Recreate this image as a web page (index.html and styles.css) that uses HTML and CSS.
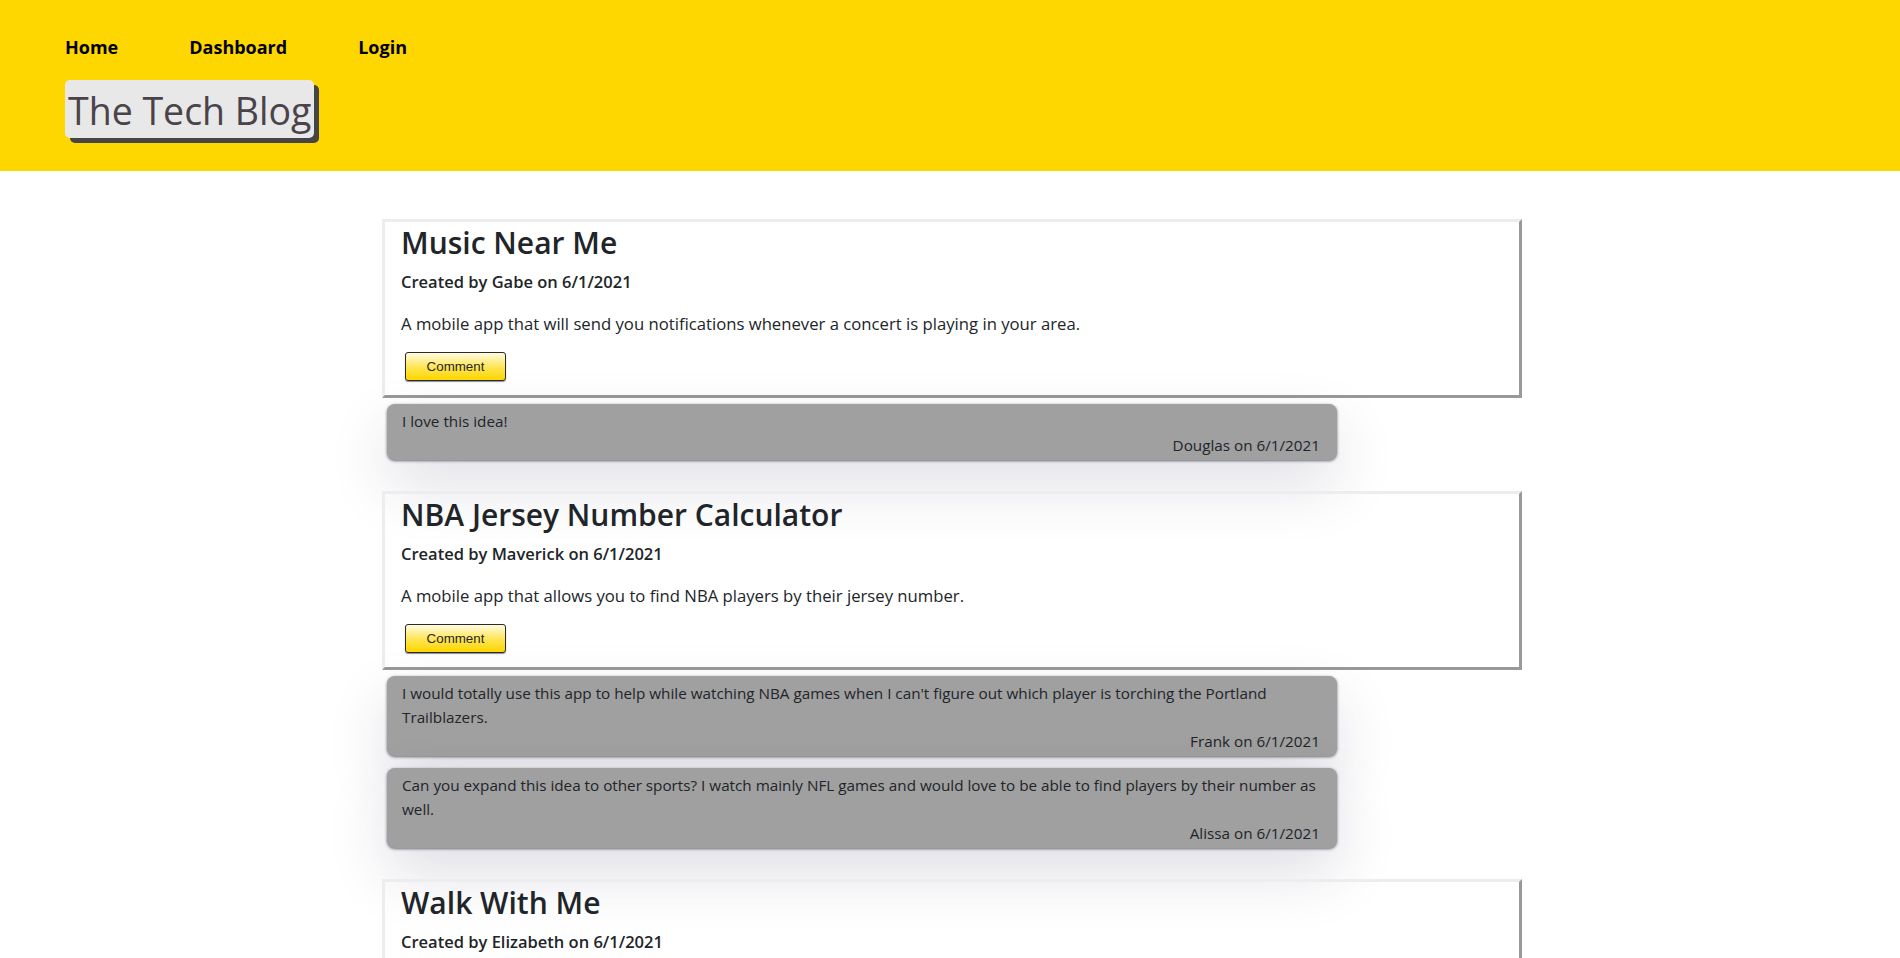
FILE: index.html
```html
<!DOCTYPE html>
<html lang="en">
<head>
<meta charset="utf-8">
<title>The Tech Blog</title>
<link rel="stylesheet" href="styles.css">
</head>
<body>
<header class="site-header">
  <nav class="nav">
    <a class="nav-link" href="#">Home</a>
    <a class="nav-link" href="#">Dashboard</a>
    <a class="nav-link" href="#">Login</a>
  </nav>
  <h1 class="brand">The Tech Blog</h1>
</header>
<main class="feed">
  <article class="post">
    <section class="card">
      <h2 class="card-title">Music Near Me</h2>
      <h5 class="card-meta">Created by Gabe on 6/1/2021</h5>
      <p class="card-text">A mobile app that will send you notifications whenever a concert is playing in your area.</p>
      <button class="btn-comment" type="button">Comment</button>
    </section>
    <div class="comments">
      <div class="comment">
        <p class="comment-text">I love this idea!</p>
        <p class="comment-meta">Douglas on 6/1/2021</p>
      </div>
    </div>
  </article>
  <article class="post">
    <section class="card">
      <h2 class="card-title">NBA Jersey Number Calculator</h2>
      <h5 class="card-meta">Created by Maverick on 6/1/2021</h5>
      <p class="card-text">A mobile app that allows you to find NBA players by their jersey number.</p>
      <button class="btn-comment" type="button">Comment</button>
    </section>
    <div class="comments">
      <div class="comment">
        <p class="comment-text">I would totally use this app to help while watching NBA games when I can't figure out which player is torching the Portland Trailblazers.</p>
        <p class="comment-meta">Frank on 6/1/2021</p>
      </div>
      <div class="comment">
        <p class="comment-text">Can you expand this idea to other sports? I watch mainly NFL games and would love to be able to find players by their number as well.</p>
        <p class="comment-meta">Alissa on 6/1/2021</p>
      </div>
    </div>
  </article>
  <article class="post">
    <section class="card">
      <h2 class="card-title">Walk With Me</h2>
      <h5 class="card-meta">Created by Elizabeth on 6/1/2021</h5>
      <p class="card-text">A mobile app that connects you with people who want to go for a walk nearby.</p>
      <button class="btn-comment" type="button">Comment</button>
    </section>
  </article>
</main>
</body>
</html>
```
FILE: styles.css
```css
* { box-sizing: border-box; }

body {
  margin: 0;
  background: #fff;
  color: #212529;
  font-family: "Open Sans", "Noto Sans", sans-serif;
  font-size: 15.25px;
  line-height: 24px;
}

.site-header {
  height: 171px;
  padding: 35px 0 0 65px;
  background: #ffd700;
}

.nav {
  display: flex;
  gap: 71px;
  line-height: 24px;
}

.nav-link {
  color: #000;
  font-size: 18px;
  font-weight: 700;
  text-decoration: none;
}

.brand {
  display: inline-block;
  margin: 21px 0 0;
  padding: 7px 3px 3px 3px;
  background: #e8e8e8;
  border-radius: 5px;
  box-shadow: 5px 5px 0 #454545;
  color: #4a4349;
  font-size: 37.5px;
  font-weight: 400;
  line-height: 48px;
}

.feed {
  display: flex;
  flex-direction: column;
  gap: 31px;
  width: 1140px;
  margin: 48px 0 0 calc(50% - 568px);
}

.card {
  border: 3px solid;
  border-color: #ededed #999 #999 #ededed;
  padding: 2px 16px 14px;
}

.card-title {
  margin: 0;
  font-size: 30px;
  font-weight: 600;
  line-height: 38px;
}

.card-meta {
  margin: 8px 0 0;
  font-size: 16.5px;
  font-weight: 600;
  line-height: 24px;
}

.card-text {
  margin: 18px 0 0;
  font-size: 16.7px;
}

.btn-comment {
  display: block;
  width: 101px;
  height: 29px;
  margin: 16px 0 0 4px;
  padding: 0;
  border: 1px solid #2b2b2b;
  border-radius: 3px;
  background: linear-gradient(#fffbe2, #ffe44d 55%, #ffd700);
  box-shadow: 0 1px 1px rgba(0, 0, 0, 0.45);
  color: #262626;
  font-family: "Liberation Sans", Arial, sans-serif;
  font-size: 13.33px;
}

.comments {
  display: flex;
  flex-direction: column;
  gap: 12px;
  margin-top: 6px;
}

.comment {
  width: 950px;
  margin-left: 5px;
  padding: 5px 17px 3px 15px;
  background: #a0a0a0;
  border-radius: 8px;
  box-shadow: 0 1px 3px rgba(70, 76, 86, 0.8), 0 25px 60px rgba(40, 40, 80, 0.15);
}

.comment-text,
.comment-meta {
  margin: 0;
}

.comment-meta {
  text-align: right;
}
```
